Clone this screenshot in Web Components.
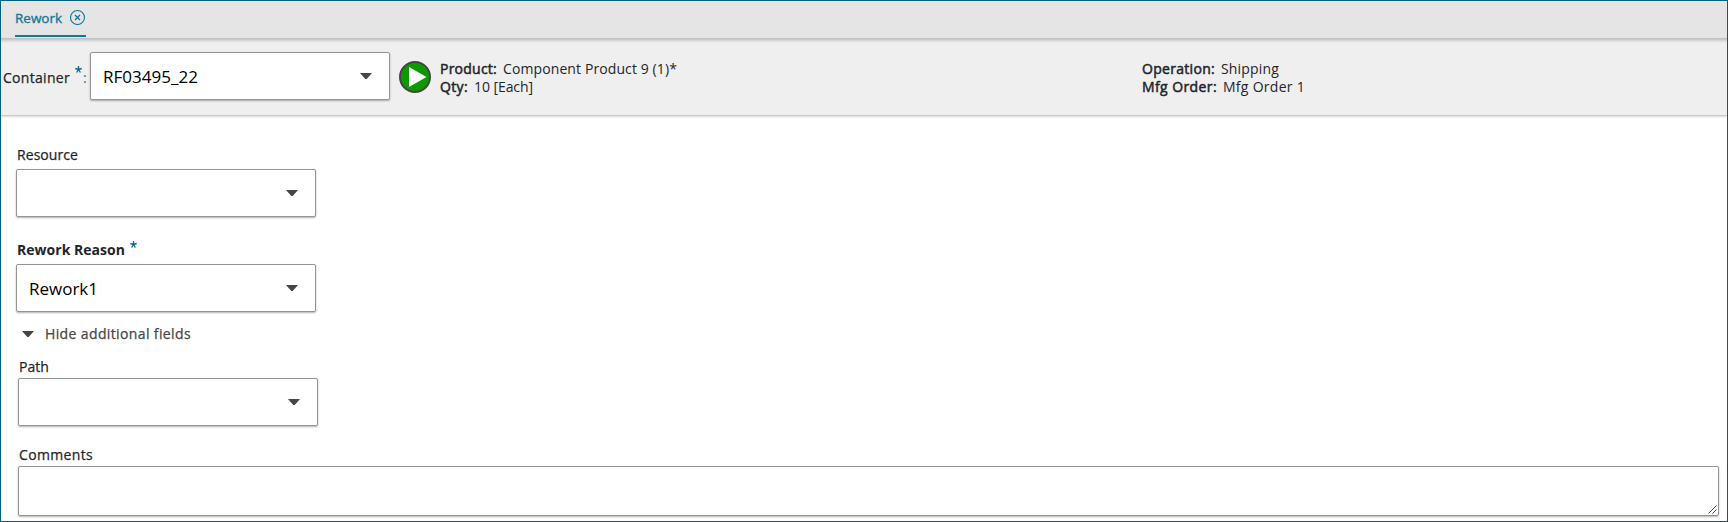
<!DOCTYPE html>
<html lang="en"><head><meta charset="utf-8"><title>Rework</title>
<style>html,body{margin:0;height:100%;overflow:hidden}body{font-family:"Open Sans","Noto Sans",sans-serif;color:#1e252b;background:#fff}</style></head>
<body><rework-page></rework-page>
<script>
function define(name, html, ready){
  const t=document.createElement('template');t.innerHTML=html;
  customElements.define(name,class extends HTMLElement{
    constructor(){super();this.attachShadow({mode:'open'}).append(t.content.cloneNode(true));}
    connectedCallback(){if(ready)ready(this);}
  });
}
// One line of text whose tracking is tuned so that it fills the given width.
define('fit-text','<style>:host{display:block;white-space:pre;line-height:18px;font-size:14px;flex:none}span{display:inline-block}</style><span><slot></slot></span>',el=>{
  const s=el.shadowRoot.querySelector('span'),w=+el.getAttribute('w');
  const n=el.textContent.length;
  el.style.width=w+'px';
  s.style.letterSpacing=(w-s.getBoundingClientRect().width)/n+'px';
});
define('down-arrow','<style>:host{display:block;width:12px;height:6px;flex:none}svg{display:block}</style><svg width="12" height="6"><path d="M0 0H12L6.7 6H5.3Z" fill="#464646"/></svg>');
define('select-box',`<style>:host{display:flex;align-items:center;justify-content:space-between;box-sizing:border-box;width:300px;height:48px;flex:none;border:1px solid #949494;border-radius:2px;background:#fff;box-shadow:0 1px 2px rgba(0,0,0,.3);padding:0 17px 0 12px;color:#000;font-weight:400;-webkit-text-stroke:0}
.v{padding-top:1px}down-arrow{margin-top:-1px}</style><div class="v"><slot></slot></div><down-arrow></down-arrow>`);
define('required-mark','<style>:host{display:block;color:#0b6b91;width:7px;height:7px;flex:none}svg{display:block}</style><svg width="7" height="7" viewBox="0 0 7 7" fill="none" stroke="currentColor" stroke-width="1.35"><path d="M3.5 0V3.5M3.5 3.5L.3 2.5M3.5 3.5L6.7 2.5M3.5 3.5L1.6 6.5M3.5 3.5L5.4 6.5"/></svg>');
define('tab-bar',`<style>:host{display:flex;height:37px;box-sizing:border-box;background:#e5e5e5;padding-left:14px}
.tab{display:flex;width:71px;height:36px;box-sizing:border-box;border-bottom:2px solid #0f789b;color:#147799}
fit-text{margin:8px 8px 0 0;font-size:13.5px;-webkit-text-stroke:.35px}svg{margin-top:8px;flex:none}</style>
<div class="tab"><fit-text w="47">Rework</fit-text><svg width="16" height="16" fill="none" stroke="#147799"><circle cx="7.5" cy="8.5" r="7" stroke-width="1.1"/><path d="M5 6L10 11M10 6L5 11" stroke-width="1.3"/></svg></div>`);
define('info-row',`<style>:host{display:flex;height:18px}::slotted([slot=k]){-webkit-text-stroke:.5px;margin-right:6px}</style><slot name="k"></slot><slot></slot>`);
define('status-header',`<style>:host{display:flex;box-sizing:border-box;height:78px;background:linear-gradient(#bcbcbc,#c5c5c5 1px,#d1d1d1 2px,#dcdcdc 3px,#e6e6e6 4px,#efefef 5px);border-bottom:1px solid #c9c9c9;box-shadow:0 1px 2px rgba(0,0,0,.15);padding-left:2px}
.lab{margin-top:31px;-webkit-text-stroke:.25px}required-mark{margin:28px 1px 0 5px}.colon{margin:31px 5px 0 0;color:#147799}
select-box{margin-top:14px}.play{margin:23px 0 0 9px;flex:none}.a{margin:22px 0 0 9px;width:702px;flex:none}.b{margin-top:22px}</style>
<fit-text class="lab" w="67">Container</fit-text><required-mark></required-mark><fit-text class="colon" w="2">:</fit-text>
<select-box><fit-text w="95" style="line-height:24px;font-size:17px">RF03495_22</fit-text></select-box>
<svg class="play" width="32" height="32"><circle cx="16" cy="16" r="15" fill="#0c9a00" stroke="#444" stroke-width="2"/><path d="M10 6V26L27.5 16Z" fill="#fff"/></svg>
<div class="a"><info-row><fit-text slot="k" w="57">Product:</fit-text><fit-text w="174">Component Product 9 (1)*</fit-text></info-row><info-row><fit-text slot="k" w="28">Qty:</fit-text><fit-text w="59">10 [Each]</fit-text></info-row></div>
<div class="b"><info-row><fit-text slot="k" w="73">Operation:</fit-text><fit-text w="58">Shipping</fit-text></info-row><info-row><fit-text slot="k" w="75">Mfg Order:</fit-text><fit-text w="82">Mfg Order 1</fit-text></info-row></div>`);
define('form-field',`<style>:host{display:block}.l{display:flex;height:var(--label-height,23px);padding-left:1px;-webkit-text-stroke:.25px}</style><div class="l"><slot name="label"></slot></div><slot></slot>`);
define('comment-box',`<style>:host{display:flex;box-sizing:border-box;width:1701px;height:50px;border:1px solid #949494;border-radius:2px;box-shadow:0 1px 2px rgba(0,0,0,.3);justify-content:flex-end;align-items:flex-end;padding:0 1px 1px}</style><svg width="9" height="9" stroke="#444"><path d="M.5 8.5L8.5 .5M4.5 8.5L8.5 4.5" stroke-width="1" fill="none"/></svg>`);
define('rework-page',`<style>:host{display:block;box-sizing:border-box;width:1728px;height:522px;border:1px solid #005f82;overflow:hidden;background:#fff}
.body{padding:30px 0 0 15px}.reason{margin-top:24px}.toggle{display:flex;align-items:center;gap:11px;margin:13px 0 0 6px;color:#464646;-webkit-text-stroke:.25px}.path,.comments{--label-height:20px}.path{margin:15px 0 0 2px}.comments{margin:20px 0 0 2px}
required-mark{margin:0 0 0 5px}.bold{font-weight:700;-webkit-text-stroke:0}</style>
<tab-bar></tab-bar><status-header></status-header>
<div class="body">
<form-field><fit-text slot="label" w="61">Resource</fit-text><select-box></select-box></form-field>
<form-field class="reason"><fit-text slot="label" class="bold" w="108">Rework Reason</fit-text><required-mark slot="label"></required-mark><select-box><fit-text w="69" style="line-height:24px;font-size:17px">Rework1</fit-text></select-box></form-field>
<div class="toggle"><down-arrow></down-arrow><fit-text w="146">Hide additional fields</fit-text></div>
<form-field class="path"><fit-text slot="label" w="30">Path</fit-text><select-box></select-box></form-field>
<form-field class="comments"><fit-text slot="label" w="74">Comments</fit-text><comment-box></comment-box></form-field>
</div>`);
</script></body></html>
